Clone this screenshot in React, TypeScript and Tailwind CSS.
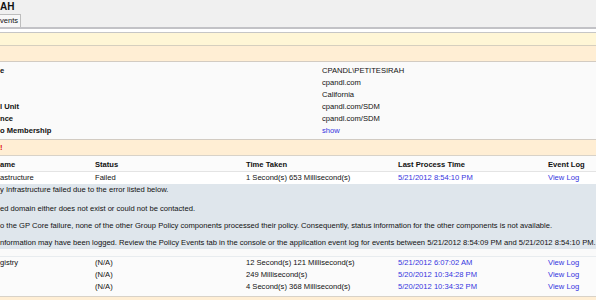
import React from "react";

const link = "text-[#3535e0]";

function InfoRow({ label, value, isLink }: { label: string; value: string; isLink?: boolean }) {
  return (
    <div className="flex h-[12px] items-center">
      <div className="w-[322px] shrink-0 font-bold whitespace-nowrap">{label}</div>
      <div className={`whitespace-nowrap ${isLink ? link : ""}`}>{value}</div>
    </div>
  );
}

const cols = "grid grid-cols-[95px_151px_152px_150px_1fr] items-center whitespace-nowrap";

function CompRow({ a, b, c, d }: { a: string; b: string; c: string; d: string }) {
  return (
    <div className={`${cols} h-[12px]`}>
      <div>{a}</div>
      <div>{b}</div>
      <div>{c}</div>
      <div className={link}>{d}</div>
      <div className={link}>View Log</div>
    </div>
  );
}

export default function App() {
  return (
    <div
      className="w-[596px] h-[300px] overflow-hidden bg-[#fafafa] text-[#111] text-[7.6px] leading-[12px]"
      style={{ fontFamily: '"Liberation Sans", Arial, sans-serif' }}
    >
      {/* top bar */}
      <div className="h-[27px] bg-[#f0f0f0] flex flex-col">
        <div className="h-[14px] pt-[1px] text-[10px] leading-[12px] font-bold text-[#111]">AH</div>
        <div className="h-[13px] w-[21px] border border-b-0 border-l-0 border-[#bdbdbd] bg-[#f7f7f7] leading-[12px] overflow-hidden">
          vents
        </div>
      </div>
      <div className="h-[2px] bg-[#c2c2c6]" />
      <div className="h-[3px] bg-white" />
      <div className="h-[1px] bg-[#c6c6c6]" />
      <div className="h-[12px] bg-[#fff6d6]" />
      <div className="h-[1px] bg-[#d6cfbf]" />
      <div className="h-[15px] bg-[#ffeed4]" />
      <div className="h-[1px] bg-[#d2cbc2]" />

      {/* info */}
      <div className="pt-[3px] pb-[2px]">
        <InfoRow label="e" value="CPANDL\PETITESIRAH" />
        <InfoRow label="" value="cpandl.com" />
        <InfoRow label="" value="California" />
        <InfoRow label="l Unit" value="cpandl.com/SDM" />
        <InfoRow label="nce" value="cpandl.com/SDM" />
        <InfoRow label="o Membership" value="show" isLink />
      </div>
      <div className="h-[1px] bg-[#d2cbc2]" />
      <div className="h-[15px] bg-[#ffeed4] flex items-center">
        <span className="text-[#e01010] font-bold">!</span>
      </div>
      <div className="h-[1px] bg-[#d8d2c8]" />

      {/* header */}
      <div className={`${cols} h-[15px] bg-[#fbfbfb] font-bold pt-[3px]`}>
        <div>ame</div>
        <div>Status</div>
        <div>Time Taken</div>
        <div>Last Process Time</div>
        <div>Event Log</div>
      </div>
      <div className="h-[1px] bg-[#e4e4e4]" />
      <div className="bg-white">
        <CompRow a="astructure" b="Failed" c="1 Second(s) 653 Millisecond(s)" d="5/21/2012 8:54:10 PM" />
      </div>

      {/* error details */}
      <div className="bg-[#dfe6ec] whitespace-nowrap">
        <div className="h-[12px]">y Infrastructure failed due to the error listed below.</div>
        <div className="h-[12px] mt-[7px]">ed domain either does not exist or could not be contacted.</div>
        <div className="h-[12px] mt-[5px]">
          o the GP Core failure, none of the other Group Policy components processed their policy. Consequently, status information for the other components is not available.
        </div>
        <div className="h-[12px] mt-[5px] mb-[7px]">
          nformation may have been logged. Review the Policy Events tab in the console or the application event log for events between 5/21/2012 8:54:09 PM and 5/21/2012 8:54:10 PM.
        </div>
      </div>
      <div className="h-[1px] bg-[#e8ecef]" />

      <div className="bg-[#fbfbfb] pb-[3px]">
        <CompRow a="gistry" b="(N/A)" c="12 Second(s) 121 Millisecond(s)" d="5/21/2012 6:07:02 AM" />
        <CompRow a="" b="(N/A)" c="249 Millisecond(s)" d="5/20/2012 10:34:28 PM" />
        <CompRow a="" b="(N/A)" c="4 Second(s) 368 Millisecond(s)" d="5/20/2012 10:34:32 PM" />
      </div>
      <div className="h-[1px] bg-[#d8d2c8]" />
      <div className="h-[10px] bg-[#ffeed4]" />
    </div>
  );
}
